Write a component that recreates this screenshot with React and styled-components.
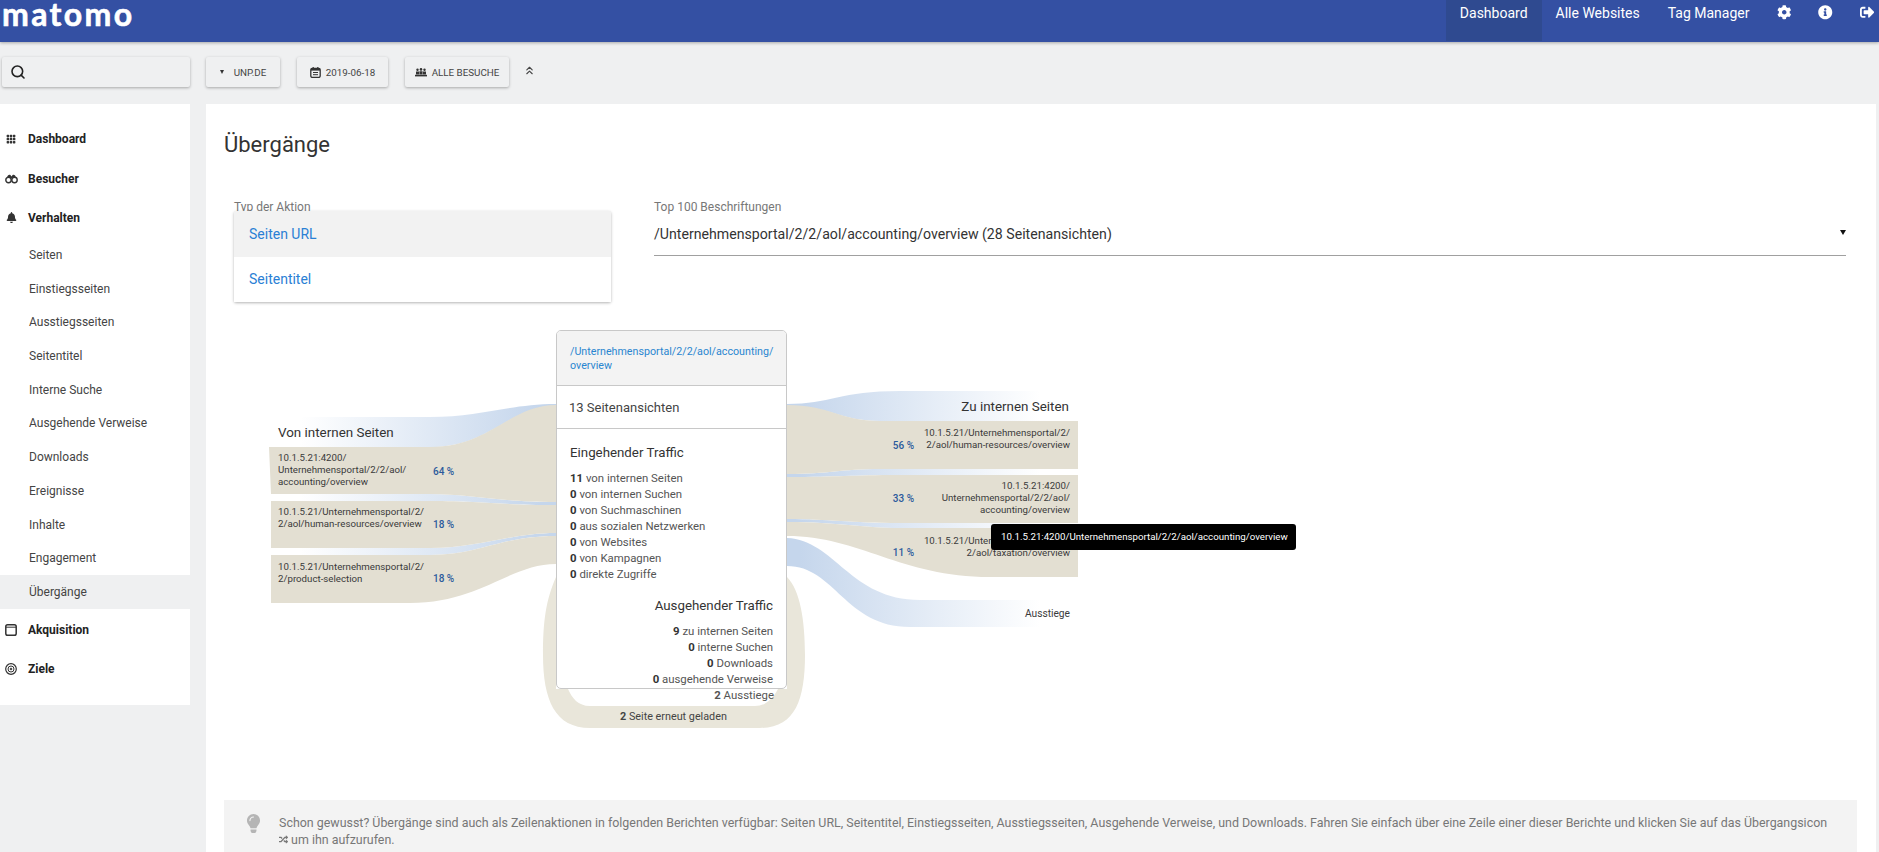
import React from 'react';
import styled, {createGlobalStyle} from 'styled-components';
import {Search, ChevronsUp} from 'lucide-react';
import {
  FaBell,
  FaCog,
  FaInfoCircle,
  FaLightbulb,
  FaRandom,
  FaSignOutAlt
} from 'react-icons/fa';
import {BsGrid3X3GapFill} from 'react-icons/bs';

const GlobalStyle = createGlobalStyle`
  html, body {
    margin: 0;
    padding: 0;
    height: 100%;
    overflow: hidden;
    background: #eff0f1;
    font-family: Roboto, "Liberation Sans", sans-serif;
    color: #333;
  }
`;

const Page = styled.div`
  height: 852px;
  overflow: hidden;
`;

const TopBar = styled.header`
  height: 42px;
  background: #3450a3;
  box-shadow: 0 1px 3px rgba(0, 0, 0, 0.3);
  display: flex;
  justify-content: space-between;
`;

const Logo = styled.div`
  font-family: Lato, sans-serif;
  font-weight: 700;
  font-size: 32px;
  line-height: 28px;
  letter-spacing: 2.4px;
  -webkit-text-stroke: 0.6px #fff;
  color: #fff;
  padding-left: 2px;
`;

const Nav = styled.nav`
  display: flex;
  align-items: flex-start;
  padding-right: 5px;
`;

const NavTab = styled.a`
  height: 41px;
  line-height: 27px;
  padding: 0 14px;
  font-size: 14px;
  color: #fff;
  background: ${p => (p.$active ? '#2f4a90' : 'transparent')};
`;

const NavIcons = styled.div`
  display: flex;
  gap: 27px;
  padding: 5px 0 0 13px;
  color: #fff;
  font-size: 14.5px;
`;

const Toolbar = styled.div`
  display: flex;
  align-items: center;
  height: 30px;
  padding: 15px 0 17px 2px;
`;

const SearchBox = styled.div`
  width: 188px;
  height: 30px;
  margin-right: 16px;
  padding-left: 8px;
  box-sizing: border-box;
  display: flex;
  align-items: center;
  border-radius: 2px;
  box-shadow: 0 1px 3px rgba(0, 0, 0, 0.3);
`;

const ToolButton = styled.div`
  height: 30px;
  width: ${p => p.$width}px;
  margin-right: 17px;
  box-sizing: border-box;
  display: flex;
  align-items: center;
  justify-content: center;
  gap: 5px;
  border-radius: 2px;
  box-shadow: 0 1px 3px rgba(0, 0, 0, 0.3);
  font-size: 9.8px;
  color: #444;
  text-transform: uppercase;
`;

const Caret = styled.span`
  width: 0;
  height: 0;
  margin-right: 5px;
  border-left: 2.5px solid transparent;
  border-right: 2.5px solid transparent;
  border-top: 4px solid #333;
`;

const Collapse = styled.div`
  display: flex;
  margin: -3px 0 0 -3px;
  color: #444;
`;

const Columns = styled.div`
  display: grid;
  grid-template-columns: 190px 1fr;
  column-gap: 16px;
  padding-right: 3px;
  align-items: start;
`;

const Sidebar = styled.aside`
  background: #fff;
  padding: 15px 0 17px;
`;

const MenuHead = styled.div`
  height: ${p => p.$h || 40}px;
  box-sizing: border-box;
  padding: ${p => p.$pad || '0'};
  display: flex;
  align-items: center;
  font-size: 12px;
  font-weight: 700;
  color: #222;
`;

const MenuIcon = styled.span`
  width: 22px;
  margin-right: 6px;
  display: flex;
  justify-content: center;
  font-size: ${p => p.$size || 11}px;
  color: #333;
`;

const MenuItem = styled.div`
  height: 33.7px;
  line-height: 35.5px;
  padding-left: 29px;
  font-size: 12px;
  color: #444;
  background: ${p => (p.$active ? '#eff0f1' : 'transparent')};
`;

const Card = styled.main`
  box-sizing: border-box;
  background: #fff;
  height: 748px;
  padding: 25px 19px 0 18px;
`;

const Title = styled.h1`
  margin: 0;
  font-size: 22px;
  font-weight: 400;
  line-height: 32px;
  color: #333;
`;

const FormRow = styled.div`
  display: grid;
  grid-template-columns: 377px 1fr;
  column-gap: 43px;
  margin: 39px 11px 0 10px;
`;

const FieldLabel = styled.div`
  font-size: 12px;
  line-height: 14px;
  color: #777;
  margin-bottom: ${p => p.$mb}px;
`;

const Tabs = styled.div`
  position: relative;
  background: #fff;
  border-radius: 2px;
  box-shadow: 0 1px 3px rgba(0, 0, 0, 0.3);
`;

const TabRow = styled.div`
  height: ${p => p.$h}px;
  line-height: ${p => p.$h}px;
  padding-left: 15px;
  font-size: 14px;
  color: #2a80d5;
  background: ${p => (p.$active ? '#f2f2f2' : '#fff')};
`;

const Select = styled.div`
  height: 33px;
  line-height: 24px;
  margin-top: 8px;
  border-bottom: 1px solid #a0a0a0;
  font-size: 14.15px;
  color: #333;
  display: flex;
  justify-content: space-between;
`;

const SelectArrow = styled.span`
  width: 0;
  height: 0;
  margin-top: 8px;
  border-left: 3.5px solid transparent;
  border-right: 3.5px solid transparent;
  border-top: 5px solid #111;
`;

const Diagram = styled.div`
  position: relative;
  height: 480px;
  margin-top: 18px;
`;

const Flows = styled.svg`
  position: absolute;
  left: 0;
  top: 0;
`;

// the canvas sits at page (224,320) and ends at x 1857, labels take page coords
const Label = styled.div`
  position: absolute;
  left: ${p => (p.$left !== undefined ? p.$left - 224 + 'px' : 'auto')};
  right: ${p => (p.$right !== undefined ? 1857 - p.$right + 'px' : 'auto')};
  top: ${p => p.$top - 320}px;
  font-size: ${p => p.$size || 9.7}px;
  line-height: ${p => p.$line || 12}px;
  color: ${p => p.$color || '#3a3a3a'};
  font-weight: ${p => p.$weight || 400};
  text-align: ${p => (p.$right !== undefined ? 'right' : 'left')};
  white-space: nowrap;
`;

const CenterBox = styled.div`
  position: absolute;
  left: 332px;
  top: 10px;
  width: 231px;
  height: 359px;
  box-sizing: border-box;
  border: 1px solid #c8c8c8;
  border-radius: 5px;
  background: #fff;
  overflow: hidden;
`;

const BoxHead = styled.div`
  height: 55px;
  box-sizing: border-box;
  padding: 14px 13px 0;
  background: #f3f3f3;
  border-bottom: 1px solid #c8c8c8;
  font-size: 10.7px;
  line-height: 14px;
  color: #2a86d0;
`;

const BoxCount = styled.div`
  height: 43px;
  line-height: 43px;
  box-sizing: border-box;
  padding-left: 12px;
  border-bottom: 1px solid #c8c8c8;
  font-size: 13px;
  color: #444;
`;

const TrafficBlock = styled.div`
  padding: ${p => p.$pad};
  text-align: ${p => (p.$right ? 'right' : 'left')};
`;

const TrafficTitle = styled.div`
  font-size: 13.3px;
  line-height: 16px;
  margin-bottom: 9px;
  color: #333;
`;

const TrafficRow = styled.div`
  font-size: 11.4px;
  line-height: 16px;
  color: #555;
  b {
    color: #333;
    font-weight: 700;
  }
`;

const Tooltip = styled.div`
  position: absolute;
  left: 767px;
  top: 204px;
  height: 26px;
  line-height: 26px;
  padding: 0 8px 0 10px;
  background: #000;
  border-radius: 3px;
  color: #fff;
  font-size: 9.7px;
  white-space: nowrap;
`;

const Hint = styled.div`
  display: flex;
  height: 80px;
  box-sizing: border-box;
  padding: 14px 20px 0;
  background: #f3f3f3;
  font-size: 12.43px;
  line-height: 17px;
  color: #777;
`;

const HintBulb = styled.span`
  width: 35px;
  flex: none;
  color: #b5b5b5;
  font-size: 19px;
`;

const CalendarIcon = () => (
  <svg width="11" height="11" viewBox="0 0 11 11">
    <rect x="0.8" y="1.4" width="9.4" height="9" rx="1.4" fill="none" stroke="#333" strokeWidth="1.3" />
    <rect x="1" y="1.4" width="9" height="2.2" fill="#333" />
    <rect x="2.6" y="0" width="1.2" height="2" fill="#333" />
    <rect x="7.2" y="0" width="1.2" height="2" fill="#333" />
    <path d="M3 5.5h5M3 7.7h5" stroke="#333" strokeWidth="1" />
  </svg>
);

const SegmentIcon = () => (
  <svg width="12" height="9" viewBox="0 0 12 9">
    <circle cx="2.5" cy="1.8" r="1.2" fill="#333" />
    <circle cx="6" cy="1.4" r="1.3" fill="#333" />
    <circle cx="9.5" cy="1.8" r="1.2" fill="#333" />
    <path d="M1 3.4h3v3H1zM4.4 3.2h3.2v3.2H4.4zM8 3.4h3v3H8z" fill="#333" />
    <rect x="0" y="6.8" width="12" height="1.6" fill="#333" />
  </svg>
);

const BinocularsIcon = () => (
  <svg width="13" height="10" viewBox="0 0 13 10">
    <path d="M2 4 C2.4 1 4 0.5 5.4 1 L6.5 2.4 L7.6 1 C9 0.5 10.6 1 11 4 Z" fill="#333" />
    <circle cx="3.5" cy="6" r="2.7" fill="#fff" stroke="#333" strokeWidth="1.4" />
    <circle cx="9.5" cy="6" r="2.7" fill="#fff" stroke="#333" strokeWidth="1.4" />
  </svg>
);

const WindowIcon = () => (
  <svg width="12" height="12" viewBox="0 0 12 12">
    <rect x="0.8" y="0.8" width="10.4" height="10.4" rx="1.8" fill="none" stroke="#333" strokeWidth="1.5" />
    <path d="M1 3.2h10" stroke="#333" strokeWidth="1" />
  </svg>
);

const TargetIcon = () => (
  <svg width="12" height="12" viewBox="0 0 12 12" fill="none" stroke="#333">
    <circle cx="6" cy="6" r="5.3" strokeWidth="1.2" />
    <circle cx="6" cy="6" r="3" strokeWidth="1" />
    <circle cx="6" cy="6" r="1" fill="#333" strokeWidth="0.5" />
  </svg>
);

const leftRows = [
  {top: 452, pct: '64 %', pctTop: 466, lines: ['10.1.5.21:4200/', 'Unternehmensportal/2/2/aol/', 'accounting/overview']},
  {top: 506, pct: '18 %', pctTop: 519, lines: ['10.1.5.21/Unternehmensportal/2/', '2/aol/human-resources/overview']},
  {top: 561, pct: '18 %', pctTop: 573, lines: ['10.1.5.21/Unternehmensportal/2/', '2/product-selection']}
];

const rightRows = [
  {top: 427, pct: '56 %', pctTop: 440, lines: ['10.1.5.21/Unternehmensportal/2/', '2/aol/human-resources/overview']},
  {top: 480, pct: '33 %', pctTop: 493, lines: ['10.1.5.21:4200/', 'Unternehmensportal/2/2/aol/', 'accounting/overview']},
  {top: 535, pct: '11 %', pctTop: 547, lines: ['10.1.5.21/Unternehmensportal/2/', '2/aol/taxation/overview']}
];

const incoming = [
  ['11', 'von internen Seiten'],
  ['0', 'von internen Suchen'],
  ['0', 'von Suchmaschinen'],
  ['0', 'aus sozialen Netzwerken'],
  ['0', 'von Websites'],
  ['0', 'von Kampagnen'],
  ['0', 'direkte Zugriffe']
];

const outgoing = [
  ['9', 'zu internen Seiten'],
  ['0', 'interne Suchen'],
  ['0', 'Downloads'],
  ['0', 'ausgehende Verweise']
];

const subMenu = [
  'Seiten',
  'Einstiegsseiten',
  'Ausstiegsseiten',
  'Seitentitel',
  'Interne Suche',
  'Ausgehende Verweise',
  'Downloads',
  'Ereignisse',
  'Inhalte',
  'Engagement',
  'Übergänge'
];

const FlowShapes = () => (
  <Flows width="1100" height="480" viewBox="224 320 1100 480">
    <defs>
      <linearGradient id="inFade" gradientUnits="userSpaceOnUse" x1="300" y1="0" x2="540" y2="0">
        <stop offset="0" stopColor="#fff" />
        <stop offset="1" stopColor="#c5d6ec" />
      </linearGradient>
      <linearGradient id="outFade" gradientUnits="userSpaceOnUse" x1="800" y1="0" x2="1040" y2="0">
        <stop offset="0" stopColor="#c5d6ec" />
        <stop offset="1" stopColor="#fff" />
      </linearGradient>
    </defs>
    <g fill="url(#inFade)">
      <path d="M300 417 L430 417 C480 417 510 404 556 404 L556 406 C510 406 490 447 430 447 L300 447 Z" />
      <path d="M271 494 L430 494 C470 494 500 502 556 502 L556 505 C500 505 480 501 430 501 L271 501 Z" />
      <path d="M271 548 L430 548 C480 548 510 533 556 533 L556 536 C500 536 480 555 430 555 L271 555 Z" />
    </g>
    <g fill="url(#outFade)">
      <path d="M787 404 C830 404 840 391 900 391 L1040 391 L1040 421 L880 421 C840 421 830 406 787 406 Z" />
      <path d="M787 474 C830 474 840 469 880 469 L1078 469 L1078 475 L900 475 C850 475 840 477 787 477 Z" />
      <path d="M787 519 C830 519 850 523 900 523 L1078 523 L1078 528 L900 528 C860 528 840 522 787 522 Z" />
      <path d="M787 538 C835 540 850 600 920 600 L1040 600 L1040 627 L910 627 C845 627 835 566 787 566 Z" />
    </g>
    <g fill="#e3dfd2">
      <path d="M269 447 L430 447 C490 447 510 405 556 405 L556 502 C500 502 470 494 430 494 L271 494 Z" />
      <path d="M271 501 L430 501 C480 501 500 505 556 505 L556 533 C510 533 480 548 430 548 L271 548 Z" />
      <path d="M271 555 L430 555 C480 555 500 536 556 536 L556 564 C510 564 480 603 410 603 L271 603 Z" />
      <path d="M787 405 C830 405 840 421 880 421 L1078 421 L1078 469 L880 469 C840 469 830 474 787 474 Z" />
      <path d="M787 477 C840 477 850 475 900 475 L1078 475 L1078 523 L900 523 C850 523 830 519 787 519 Z" />
      <path d="M787 522 C840 522 860 528 900 528 L1078 528 L1078 577 L990 577 C900 577 860 536 787 536 Z" />
    </g>
    <path
      fill="#e9e6da"
      d="M556 577 C546 600 543 620 543 655 C543 700 555 728 590 728 L760 728 C795 728 805 700 805 655 C805 620 800 590 787 577 L787 689 L778 689 C772 700 765 706 755 706 L590 706 C578 706 572 698 568 689 L556 689 Z"
    />
  </Flows>
);

const App = () => (
  <Page>
    <GlobalStyle />
    <TopBar>
      <Logo>matomo</Logo>
      <Nav>
        <NavTab $active>Dashboard</NavTab>
        <NavTab>Alle Websites</NavTab>
        <NavTab>Tag Manager</NavTab>
        <NavIcons>
          <FaCog />
          <FaInfoCircle />
          <FaSignOutAlt />
        </NavIcons>
      </Nav>
    </TopBar>

    <Toolbar>
      <SearchBox>
        <Search size={16} strokeWidth={2.4} color="#222" />
      </SearchBox>
      <ToolButton $width={74}>
        <Caret />
        UNP.DE
      </ToolButton>
      <ToolButton $width={91}>
        <CalendarIcon />
        2019-06-18
      </ToolButton>
      <ToolButton $width={104}>
        <SegmentIcon />
        Alle Besuche
      </ToolButton>
      <Collapse>
        <ChevronsUp size={13} />
      </Collapse>
    </Toolbar>

    <Columns>
      <Sidebar>
        <MenuHead>
          <MenuIcon $size={10}><BsGrid3X3GapFill /></MenuIcon>
          Dashboard
        </MenuHead>
        <MenuHead>
          <MenuIcon><BinocularsIcon /></MenuIcon>
          Besucher
        </MenuHead>
        <MenuHead $h={39} $pad="0 0 2px">
          <MenuIcon><FaBell /></MenuIcon>
          Verhalten
        </MenuHead>
        {subMenu.map(name => (
          <MenuItem key={name} $active={name === 'Übergänge'}>{name}</MenuItem>
        ))}
        <MenuHead $pad="2px 0 0">
          <MenuIcon><WindowIcon /></MenuIcon>
          Akquisition
        </MenuHead>
        <MenuHead $h={39} $pad="2px 0 0">
          <MenuIcon><TargetIcon /></MenuIcon>
          Ziele
        </MenuHead>
      </Sidebar>

      <Card>
        <Title>Übergänge</Title>
        <FormRow>
          <div>
            <FieldLabel $mb={-3}>Typ der Aktion</FieldLabel>
            <Tabs>
              <TabRow $active $h={46}>Seiten URL</TabRow>
              <TabRow $h={45}>Seitentitel</TabRow>
            </Tabs>
          </div>
          <div>
            <FieldLabel $mb={0}>Top 100 Beschriftungen</FieldLabel>
            <Select>
              /Unternehmensportal/2/2/aol/accounting/overview (28 Seitenansichten)
              <SelectArrow />
            </Select>
          </div>
        </FormRow>

        <Diagram>
          <FlowShapes />

          <Label $left={278} $top={424} $size={13.4} $line={18} $color="#333">Von internen Seiten</Label>
          {leftRows.map(row => (
            <React.Fragment key={row.top}>
              <Label $left={278} $top={row.top}>
                {row.lines.map(line => <div key={line}>{line}</div>)}
              </Label>
              <Label $left={433} $top={row.pctTop} $size={10} $color="#2b5a9c" $weight={500}>{row.pct}</Label>
            </React.Fragment>
          ))}

          <Label $right={1069} $top={398} $size={13.4} $line={18} $color="#333">Zu internen Seiten</Label>
          {rightRows.map(row => (
            <React.Fragment key={row.top}>
              <Label $right={1070} $top={row.top}>
                {row.lines.map(line => <div key={line}>{line}</div>)}
              </Label>
              <Label $right={914} $top={row.pctTop} $size={10} $color="#2b5a9c" $weight={500}>{row.pct}</Label>
            </React.Fragment>
          ))}
          <Label $right={1070} $top={608} $size={10.2}>Ausstiege</Label>

          <Label $right={774} $top={687} $size={11.4} $line={16} $color="#555"><b>2</b> Ausstiege</Label>
          <Label $left={620} $top={711} $size={10.8} $color="#444"><b>2</b> Seite erneut geladen</Label>

          <CenterBox>
            <BoxHead>/Unternehmensportal/2/2/aol/accounting/ overview</BoxHead>
            <BoxCount>13 Seitenansichten</BoxCount>
            <TrafficBlock $pad="16px 13px 0">
              <TrafficTitle>Eingehender Traffic</TrafficTitle>
              {incoming.map(([n, text]) => (
                <TrafficRow key={text}><b>{n}</b> {text}</TrafficRow>
              ))}
            </TrafficBlock>
            <TrafficBlock $right $pad="16px 13px 0">
              <TrafficTitle>Ausgehender Traffic</TrafficTitle>
              {outgoing.map(([n, text]) => (
                <TrafficRow key={text}><b>{n}</b> {text}</TrafficRow>
              ))}
            </TrafficBlock>
          </CenterBox>

          <Tooltip>10.1.5.21:4200/Unternehmensportal/2/2/aol/accounting/overview</Tooltip>
        </Diagram>

        <Hint>
          <HintBulb><FaLightbulb /></HintBulb>
          <div>
            Schon gewusst? Übergänge sind auch als Zeilenaktionen in folgenden Berichten verfügbar: Seiten URL, Seitentitel, Einstiegsseiten, Ausstiegsseiten, Ausgehende Verweise, und Downloads. Fahren Sie einfach über eine Zeile einer dieser Berichte und klicken Sie auf das Übergangsicon
            <br />
            <FaRandom size={9} /> um ihn aufzurufen.
          </div>
        </Hint>
      </Card>
    </Columns>
  </Page>
);

export default App;
